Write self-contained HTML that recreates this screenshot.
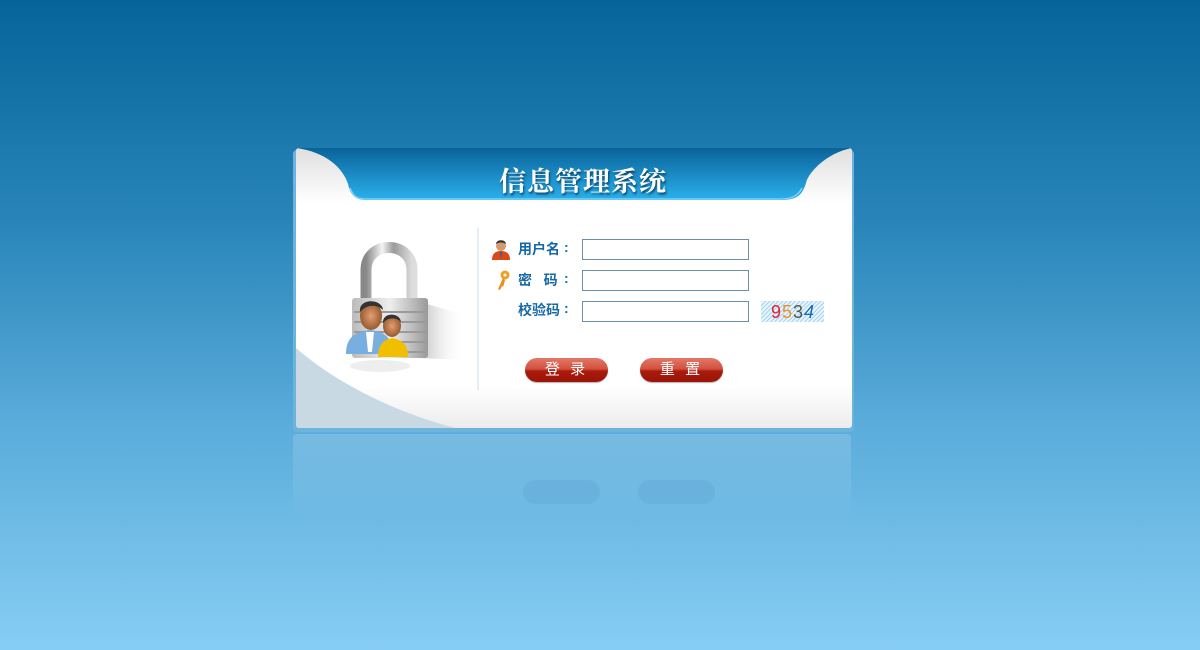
<!DOCTYPE html>
<html><head><meta charset="utf-8"><style>
html,body{margin:0;padding:0;width:1200px;height:650px;overflow:hidden}
body{background:linear-gradient(to bottom,#06649a 0%,#2a86ba 35%,#5aacda 65%,#86cdf4 100%);position:relative;font-family:"Liberation Sans","Noto Sans CJK SC",sans-serif}
.abs{position:absolute}
.lbl{position:absolute;left:518px;font-size:14px;font-weight:bold;color:#1668a6;white-space:pre}
.col{position:absolute;left:564px;font-size:14px;font-weight:bold;color:#1668a6}
.inp{position:absolute;left:582px;width:165px;height:19px;border:1px solid #6b8fa5;background:#fff}
.btn{position:absolute;top:358px;width:83px;height:24px;border-radius:12px;background:linear-gradient(#e27868 0%,#d2513f 45%,#a91a0c 55%,#9a1408 100%);box-shadow:0 1px 1px rgba(0,0,0,.3);color:#fff;font-size:15px;text-align:center;line-height:24px;letter-spacing:3px}
</style></head><body>
<!-- reflection -->
<div class="abs" style="left:293px;top:434px;width:558px;height:90px;border-radius:4px;background:linear-gradient(rgba(255,255,255,.16),rgba(255,255,255,0));"></div>
<div class="abs" style="left:523px;top:480px;width:77px;height:24px;border-radius:12px;background:rgba(80,150,200,.2)"></div>
<div class="abs" style="left:638px;top:480px;width:77px;height:24px;border-radius:12px;background:rgba(80,150,200,.2)"></div>
<!-- panel -->
<div class="abs" style="left:293px;top:150px;width:561px;height:282px;border-radius:4px;background:#6cb4dc"></div>
<div class="abs" style="left:296px;top:148px;width:556px;height:280px;border-radius:3px;overflow:hidden;background:linear-gradient(#fff 0%,#fff 85%,#ececec 100%)">
<svg width="556" height="280" style="position:absolute;left:0;top:0">
<defs>
<linearGradient id="hb" x1="0" y1="0" x2="0" y2="1"><stop offset="0" stop-color="#0a6399"/><stop offset="1" stop-color="#2ab0ec"/></linearGradient>
<linearGradient id="cw" x1="0" y1="0" x2="0" y2="1"><stop offset="0" stop-color="#dfdfdf"/><stop offset="1" stop-color="#fff"/></linearGradient>
</defs>
<rect x="0" y="0" width="556" height="55" fill="url(#cw)"/>
<path d="M0 0 H556 V0 C530 5 512 25 510 35 C506 48 500 52 485 52 H70 C58 52 54 45 52 36 C47 20 30 4 0 0Z" fill="url(#hb)"/>
<path d="M54 40 C58 50 62 51 72 51 H484 C496 51 502 48 506 40" stroke="#7fd0f6" stroke-width="1.5" fill="none"/>
<path d="M0 200 C40 235 100 265 160 280 H0Z" fill="#c9d9e3"/>
<line x1="182" y1="80" x2="182" y2="242" stroke="#c8dcec" stroke-width="1"/>
</svg>
<div style="position:absolute;left:0;width:556px;top:12px;text-align:center;font-family:'Noto Serif CJK SC',serif;font-weight:bold;font-size:27px;color:#fff;letter-spacing:1px;text-shadow:1px 2px 2px rgba(0,30,60,.7);padding-left:18px;box-sizing:border-box">信息管理系统</div>
</div>
<!-- lock image -->
<svg class="abs" style="left:340px;top:240px" width="130" height="140">
<defs>
<linearGradient id="sh" x1="0" x2="1"><stop offset="0" stop-color="#888"/><stop offset=".35" stop-color="#f4f4f4"/><stop offset=".6" stop-color="#9a9a9a"/><stop offset="1" stop-color="#ddd"/></linearGradient>
<linearGradient id="bd" x1="0" x2="1"><stop offset="0" stop-color="#bbb"/><stop offset=".5" stop-color="#eee"/><stop offset="1" stop-color="#999"/></linearGradient>
<radialGradient id="face"><stop offset="0" stop-color="#e0a070"/><stop offset="1" stop-color="#9a5a30"/></radialGradient>
<linearGradient id="shd" x1="0" x2="1"><stop offset="0" stop-color="#999" stop-opacity=".6"/><stop offset="1" stop-color="#fff" stop-opacity="0"/></linearGradient>
</defs>
<path d="M80 62 L125 75 L125 120 L80 118Z" fill="url(#shd)"/>
<path d="M26 62 V30 C26 0 72 0 72 30 V64" stroke="url(#sh)" stroke-width="11" fill="none"/>
<rect x="12" y="58" width="76" height="60" rx="3" fill="url(#bd)"/>
<g stroke="#9a9a9a" stroke-width="2"><line x1="14" y1="72" x2="86" y2="72"/><line x1="14" y1="82" x2="86" y2="82"/><line x1="14" y1="92" x2="86" y2="92"/><line x1="14" y1="102" x2="86" y2="102"/><line x1="14" y1="112" x2="86" y2="112"/></g>
<path d="M6 114 C6 98 14 92 30 90 C46 92 52 98 52 114Z" fill="#78aee0"/>
<path d="M26 92 L34 92 L32 112 L28 112Z" fill="#fff"/>
<ellipse cx="31" cy="76" rx="11" ry="14" fill="url(#face)"/>
<path d="M20 72 C18 58 42 58 43 70 C37 64 27 64 20 72Z" fill="#333"/>
<path d="M38 117 C38 104 44 100 52 98 C62 100 68 104 68 117Z" fill="#f0c000"/>
<ellipse cx="52" cy="86" rx="9" ry="11" fill="url(#face)"/>
<path d="M43 83 C42 72 60 72 61 82 C56 77 48 77 43 83Z" fill="#333"/>
<ellipse cx="40" cy="126" rx="30" ry="6" fill="#ddd" opacity=".5"/>
</svg>
<!-- form -->
<svg class="abs" style="left:491px;top:239px" width="22" height="22"><circle cx="10" cy="7" r="5" fill="#d59a6c"/><path d="M5 5 C5 0 15 0 15 5 C12 3 8 3 5 5Z" fill="#333"/><path d="M1 21 C1 14 5 12 10 12 C15 12 19 14 19 21Z" fill="#d84a18"/><path d="M9 13 L11 13 L10 20Z" fill="#2a5bbf"/></svg>
<div class="lbl" style="top:239px">用户名</div><div class="col" style="top:239px">:</div>
<svg class="abs" style="left:495px;top:270px" width="16" height="22"><circle cx="10" cy="5" r="4.5" fill="#f0a020"/><circle cx="10" cy="5" r="1.5" fill="#fff"/><path d="M8 8 L3 19 L5 20 L7 16 L8 17 L9 14 L10 10Z" fill="#e89018"/></svg>
<div class="lbl" style="top:270px">密   码</div><div class="col" style="top:270px">:</div>
<div class="lbl" style="top:300px">校验码</div><div class="col" style="top:300px">:</div>
<div class="inp" style="top:239px"></div>
<div class="inp" style="top:270px"></div>
<div class="inp" style="top:301px"></div>
<div class="abs" style="left:761px;top:301px;width:63px;height:21px;background:repeating-linear-gradient(135deg,#a8d4f0 0 1px,#e8f4fc 1px 3px);font-size:18px;line-height:22px;padding-left:10px;box-sizing:border-box;letter-spacing:1px;font-family:'Liberation Sans',sans-serif"><span style="color:#e82030">9</span><span style="color:#f09020">5</span><span style="color:#555">3</span><span style="color:#1a6ab0;font-style:italic">4</span></div>
<div class="btn" style="left:525px">登 录</div>
<div class="btn" style="left:640px">重 置</div>
</body></html>
